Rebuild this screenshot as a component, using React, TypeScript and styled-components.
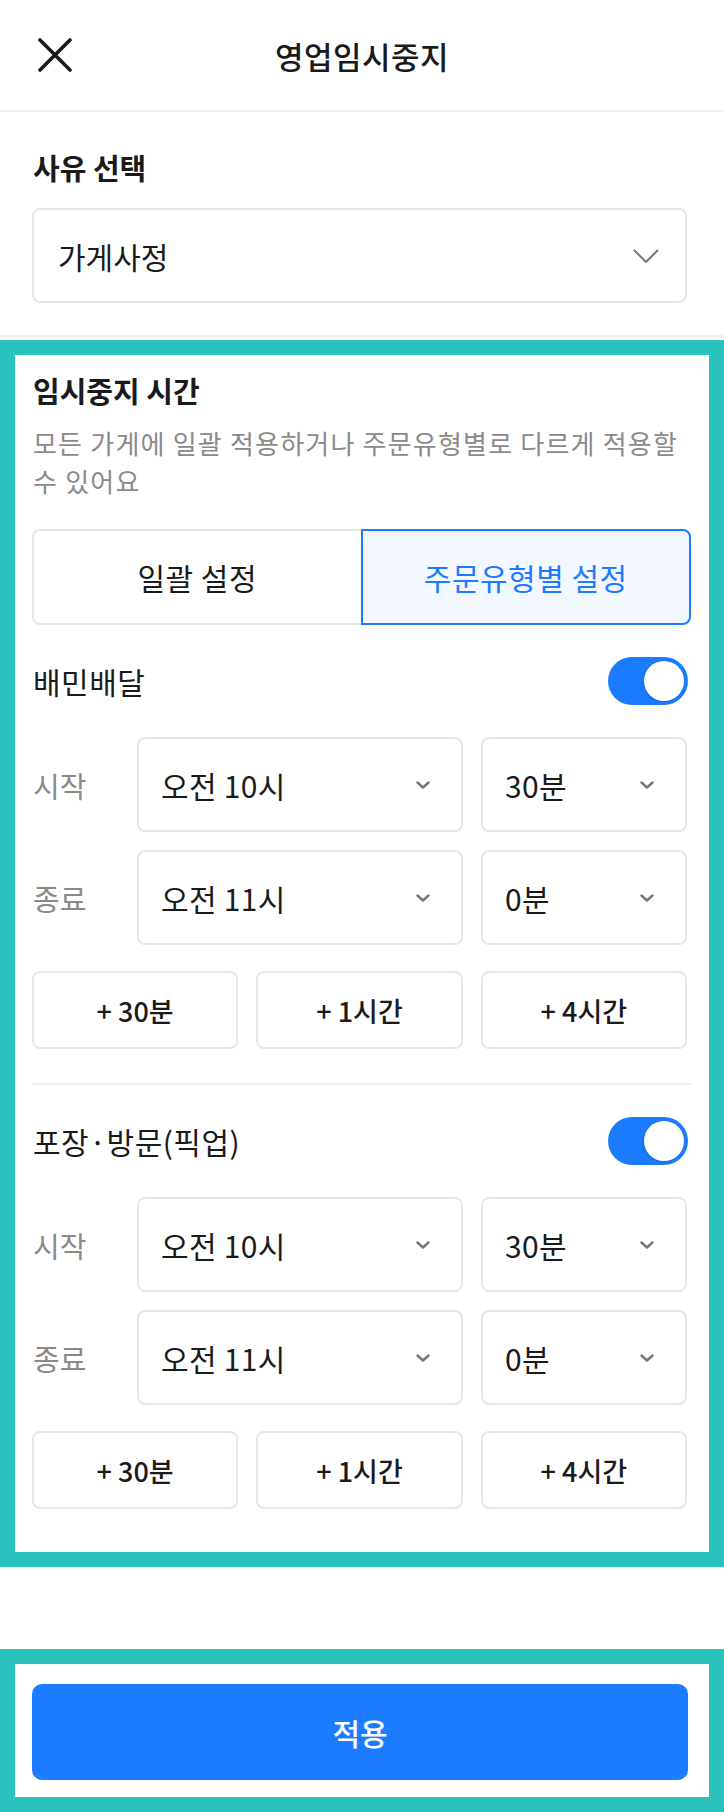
import styled, { createGlobalStyle } from "styled-components"

const GlobalStyle = createGlobalStyle`
body {
  margin: 0;
  background: #fff;
  font-family: "Noto Sans CJK KR", "Noto Sans", sans-serif;
  color: #1a1a1a;
}
* { box-sizing: border-box; }
`

const Page = styled.div`
width: 724px;
min-height: 1812px;
display: flex;
flex-direction: column;
background: #fff;
`

const Header = styled.header`
height: 112px;
display: grid;
grid-template-columns: 1fr auto 1fr;
align-items: center;
padding: 0 38px;
border-bottom: 2px solid #f1f1f1;
`

const CloseButton = styled.button`
width: 34px;
height: 34px;
padding: 0;
border: none;
background: none;
display: flex;
`

const Title = styled.h1`
margin: 0;
font-size: 31px;
font-weight: 500;
letter-spacing: 0.5px;
color: #1a1a1a;
`

const ReasonSection = styled.section`
padding: 34px 37px 32px 32px;
border-bottom: 3px solid #eeeeee;
margin-bottom: 2px;
`

const Label = styled.h2`
margin: 0 0 20px 1px;
font-size: 29px;
line-height: 42px;
font-weight: 700;
color: #1a1a1a;
`

const BigSelect = styled.div`
height: 95px;
border: 2px solid #e6e6e6;
border-radius: 8px;
display: flex;
align-items: center;
justify-content: space-between;
padding: 0 26px 0 24px;
font-size: 30px;
color: #1a1a1a;
`

const Panel = styled.section`
border: 15px solid #2bc2bd;
padding: 14px 18px 43px 17px;
display: flex;
flex-direction: column;
`

const PanelTitle = styled.h2`
margin: 0 0 0 1px;
font-size: 29px;
line-height: 42px;
font-weight: 700;
color: #1a1a1a;
`

const Description = styled.p`
margin: 13px 0 0 1px;
font-size: 26px;
line-height: 38px;
letter-spacing: 1.2px;
color: #8a8a8a;
`

const Tabs = styled.div`
display: flex;
margin-top: 29px;
height: 96px;
`

const Tab = styled.button<{ $active?: boolean }>`
flex: 1;
font-family: inherit;
font-size: 30px;
font-weight: 400;
letter-spacing: 0.5px;
border: 2px solid ${p => (p.$active ? "#1b7cff" : "#e6e6e6")};
background: ${p => (p.$active ? "#f3f7ff" : "#fff")};
color: ${p => (p.$active ? "#1b7cff" : "#1a1a1a")};
border-radius: ${p => (p.$active ? "0 8px 8px 0" : "8px 0 0 8px")};
${p => (p.$active ? "" : "border-right: none;")}
`

const ToggleRow = styled.div`
display: flex;
align-items: center;
justify-content: space-between;
margin-top: 32px;
padding-right: 3px;
`

const ToggleLabel = styled.span`
font-size: 30px;
font-weight: 400;
letter-spacing: 0.5px;
color: #1a1a1a;
margin-left: 1px;
`

const Switch = styled.div<{ $on: boolean }>`
width: 80px;
height: 48px;
border-radius: 24px;
background: ${p => (p.$on ? "#1b7cff" : "#d9d9d9")};
display: flex;
align-items: center;
justify-content: ${p => (p.$on ? "flex-end" : "flex-start")};
padding: 0 4px;
`

const Knob = styled.div`
width: 40px;
height: 40px;
border-radius: 50%;
background: #fff;
box-shadow: -1px 1px 3px rgba(0, 0, 0, 0.15);
`

const TimeRow = styled.div`
display: grid;
grid-template-columns: 87px 1fr 206px;
column-gap: 18px;
align-items: center;
margin-top: 18px;
padding-right: 4px;
&:first-of-type { margin-top: 32px; }
`

const TimeLabel = styled.span`
font-size: 29px;
color: #8a8a8a;
margin-left: 1px;
`

const SmallSelect = styled.div`
height: 95px;
border: 2px solid #e6e6e6;
border-radius: 8px;
display: flex;
align-items: center;
justify-content: space-between;
padding: 0 31px 0 22px;
font-size: 30px;
letter-spacing: 0.3px;
color: #1a1a1a;
`

const QuickRow = styled.div`
display: grid;
grid-template-columns: repeat(3, 1fr);
gap: 18px;
margin-top: 26px;
padding-right: 4px;
`

const QuickButton = styled.button`
height: 78px;
border: 2px solid #e6e6e6;
border-radius: 8px;
background: #fff;
font-family: inherit;
font-size: 27px;
font-weight: 500;
color: #1a1a1a;
`

const Divider = styled.hr`
margin: 34px 0 0;
border: none;
border-top: 2px solid #efefef;
`

const Spacer = styled.div`
height: 82px;
`

const Footer = styled.footer`
border: 15px solid #2bc2bd;
padding: 20px 21px 17px 17px;
`

const ApplyButton = styled.button`
width: 100%;
height: 96px;
border: none;
border-radius: 10px;
background: #1b7cff;
color: #fff;
font-family: inherit;
font-size: 30px;
font-weight: 500;
`

const Chevron = ({ big }: { big?: boolean }) =>
  big ? (
    <svg width="26" height="14" viewBox="0 0 26 14" fill="none">
      <path d="M1 1l12 12L25 1" stroke="#777" strokeWidth="2" />
    </svg>
  ) : (
    <svg width="14" height="8" viewBox="0 0 14 8" fill="none">
      <path d="M1.5 1.5L7 6.5l5.5-5" stroke="#777" strokeWidth="2.4" strokeLinecap="round" strokeLinejoin="round" />
    </svg>
  )

function TimeBlock({ name }: { name: string }) {
  return (
    <>
      <ToggleRow>
        <ToggleLabel>{name}</ToggleLabel>
        <Switch $on>
          <Knob />
        </Switch>
      </ToggleRow>
      <div>
        <TimeRow>
          <TimeLabel>시작</TimeLabel>
          <SmallSelect>오전 10시<Chevron /></SmallSelect>
          <SmallSelect>30분<Chevron /></SmallSelect>
        </TimeRow>
        <TimeRow>
          <TimeLabel>종료</TimeLabel>
          <SmallSelect>오전 11시<Chevron /></SmallSelect>
          <SmallSelect>0분<Chevron /></SmallSelect>
        </TimeRow>
      </div>
      <QuickRow>
        <QuickButton>+ 30분</QuickButton>
        <QuickButton>+ 1시간</QuickButton>
        <QuickButton>+ 4시간</QuickButton>
      </QuickRow>
    </>
  )
}

export default function App() {
  return (
    <>
      <GlobalStyle />
      <Page>
        <Header>
          <CloseButton>
            <svg width="34" height="34" viewBox="0 0 34 34">
              <path d="M2 2l30 30M32 2L2 32" stroke="#1a1a1a" strokeWidth="3.6" strokeLinecap="round" />
            </svg>
          </CloseButton>
          <Title>영업임시중지</Title>
          <span />
        </Header>
        <ReasonSection>
          <Label>사유 선택</Label>
          <BigSelect>
            가게사정
            <Chevron big />
          </BigSelect>
        </ReasonSection>
        <Panel>
          <PanelTitle>임시중지 시간</PanelTitle>
          <Description>모든 가게에 일괄 적용하거나 주문유형별로 다르게 적용할 수 있어요</Description>
          <Tabs>
            <Tab>일괄 설정</Tab>
            <Tab $active>주문유형별 설정</Tab>
          </Tabs>
          <TimeBlock name="배민배달" />
          <Divider />
          <TimeBlock name="포장·방문(픽업)" />
        </Panel>
        <Spacer />
        <Footer>
          <ApplyButton>적용</ApplyButton>
        </Footer>
      </Page>
    </>
  )
}
